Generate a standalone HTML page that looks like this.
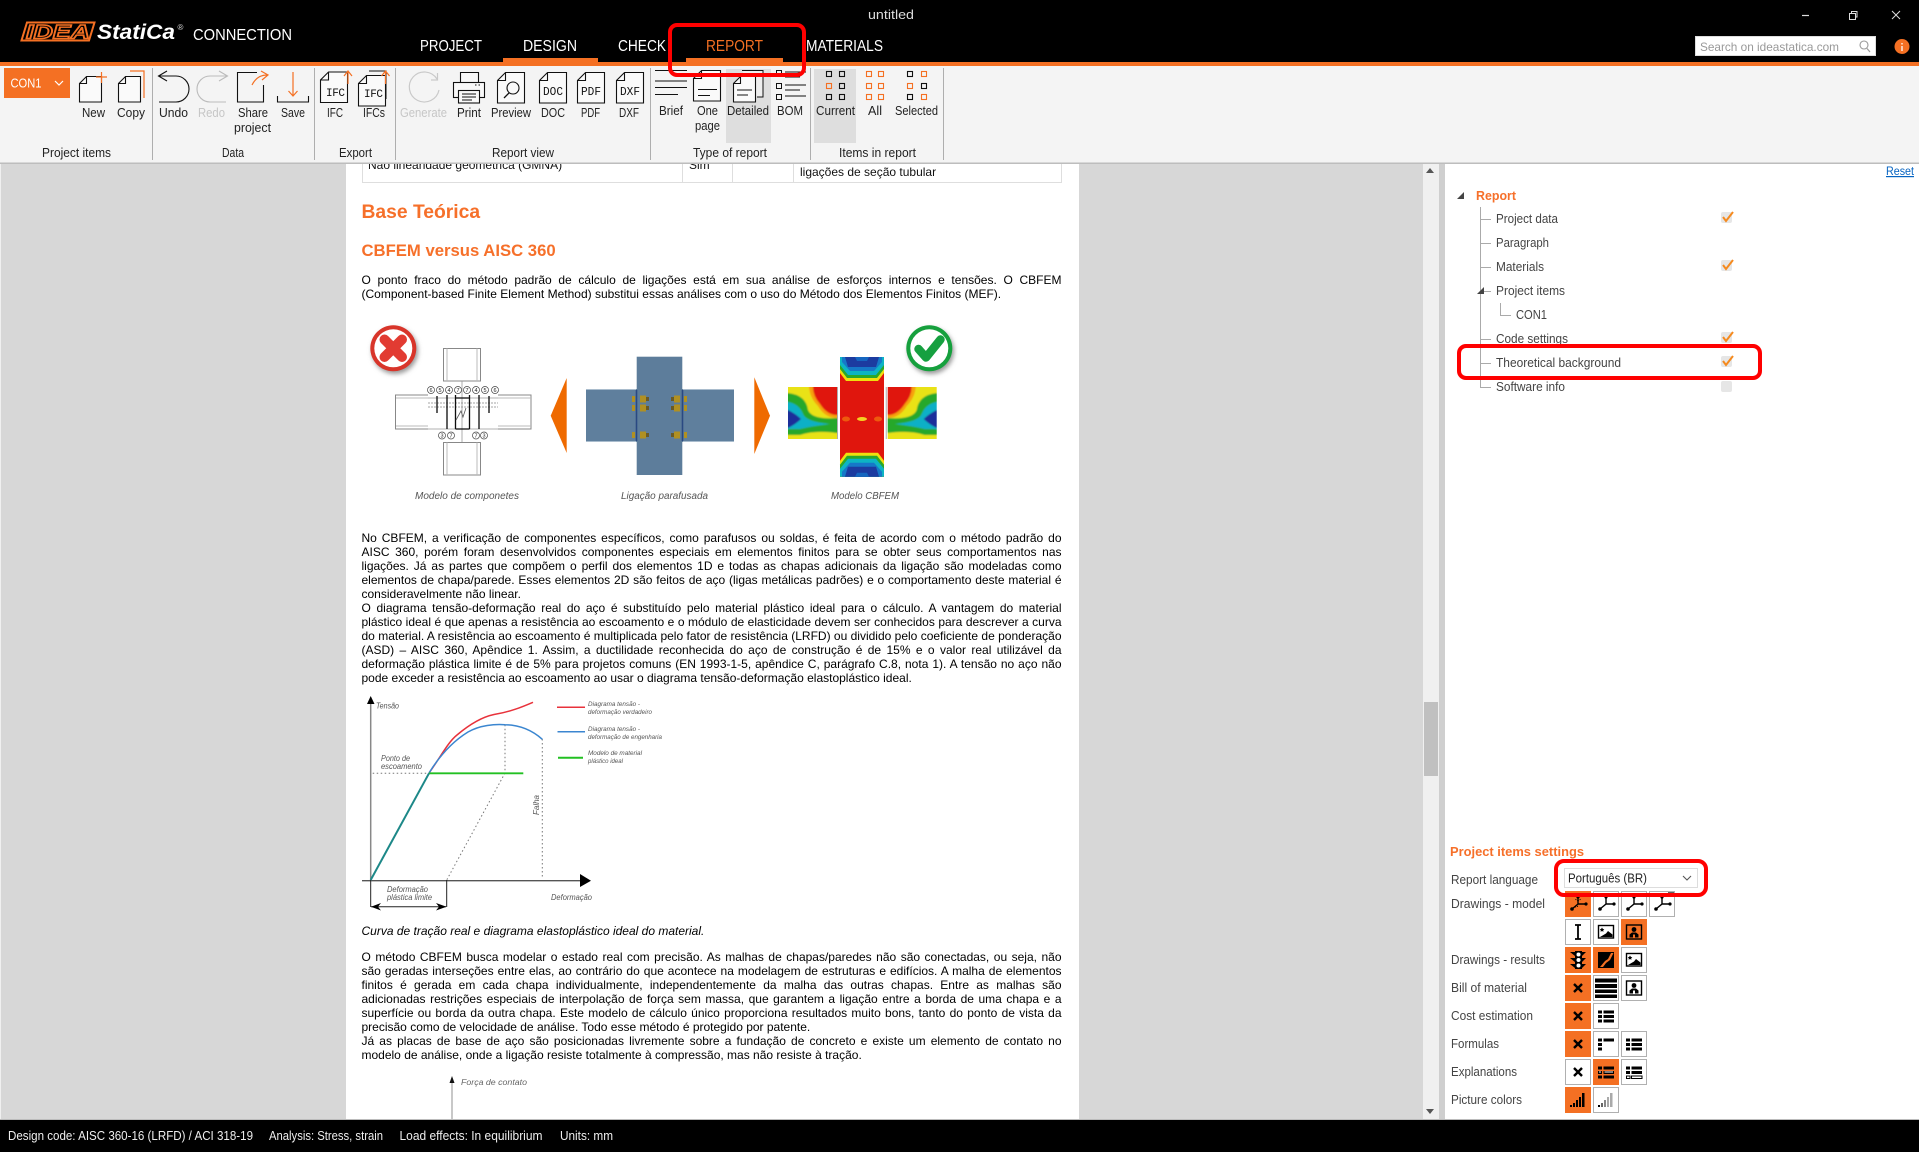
<!DOCTYPE html>
<html lang="pt"><head><meta charset="utf-8"><title>IDEA StatiCa Connection</title>
<style>
html,body{margin:0;padding:0;background:#d7d7d7;width:1919px;height:1152px;overflow:hidden}
svg{position:absolute;left:0;top:0;display:block}
svg text{font-family:"Liberation Sans",sans-serif}
.t text{font-size:12.5px;fill:#222}
.g text{font-size:12.5px;fill:#444}
.c text{font-style:italic;fill:#555}
.l{position:absolute;left:361.5px;width:700px;height:14px;font:12px/14px "Liberation Sans",sans-serif;color:#000;text-align:justify;text-align-last:justify;white-space:nowrap}
.n{text-align:left;text-align-last:left}
h1,h2{position:absolute;left:361.5px;margin:0;font-family:"Liberation Sans",sans-serif;font-weight:bold;color:#f6702a;white-space:nowrap}
h1{top:201px;font-size:19.3px;line-height:24px}
h2{top:241px;font-size:16.7px;line-height:20px}
</style></head><body>
<svg width="1919" height="1152" viewBox="0 0 1919 1152" xmlns="http://www.w3.org/2000/svg">
<defs>
<filter id="b1" x="-5%" y="-5%" width="110%" height="110%"><feGaussianBlur stdDeviation="0.35"/></filter>
<filter id="b2" x="-20%" y="-20%" width="140%" height="140%"><feGaussianBlur stdDeviation="2.5"/></filter>
<filter id="b3" x="-5%" y="-5%" width="110%" height="110%"><feGaussianBlur stdDeviation="0.8"/></filter>
<clipPath id="cp"><rect x="788" y="387" width="49" height="52"/></clipPath>
<g id="w"><rect x=".5" y=".5" width="25" height="25" fill="#fff" stroke="#b0b0b0"/></g>
<g id="o"><rect width="26" height="26" fill="#f47023"/></g>
<g id="x"><path d="M9 9L17 17M17 9L9 17" stroke="#000" stroke-width="2.4" fill="none"/></g>
<g id="ax"><path d="M13 6V13L7 18M13 13H21" stroke="#000" stroke-width="1.4" fill="none"/><circle cx="13" cy="6" r="1.6"/><circle cx="7" cy="18" r="1.8"/><circle cx="21" cy="13" r="1.6"/></g>
<g id="li"><path d="M5 7.500h4v3H5zM10.500 7.500H21v3H10.500zM5 12h4v3H5zM10.500 12H21v3H10.500zM5 16.500h4v3H5zM10.500 16.500H21v3H10.500z"/></g>
<g id="img"><rect x="5.500" y="6.500" width="15" height="12.500" fill="#fff" stroke="#000" stroke-width="1.400"/><path d="M7 18L13 14.500L15 12L19.500 15.500V18z"/><path d="M9 8.500l.8 1.400 1.500.3-1.100 1 .3 1.500-1.500-.7-1.400.7.2-1.500-1-1 1.400-.3z"/></g>
<g id="pe"><rect x="5.500" y="6" width="15" height="14" fill="none" stroke="#000" stroke-width="1.400"/><circle cx="13" cy="10.500" r="2.400"/><path d="M8.500 18.500V15.500L11 13.500H15L17.500 15.500V18.500H14V15.500H12V18.500z"/></g>
<g id="doc"><path d="M8.500.5H27.500V31H.5V8.500ZM8.500.5V8.500H.5" fill="#fafafa" stroke="#111" stroke-width="1.100"/></g>
<g id="nd"><path d="M7.500.5H22.500V26H.5V7.500ZM7.500.5V7.500H.5" fill="#fafafa" stroke="#111" stroke-width="1.100"/></g>
<g id="fe">
<polygon points="840,357 884,357 884,373 878,381 846,381 840,373" fill="#f0e010"/>
<polygon points="840,357 884,357 884,369 877,378 847,378 840,369" fill="#2aa82a"/>
<polygon points="840,357 884,357 884,365 876,375 848,375 840,365" fill="#0fb4c4"/>
<polygon points="842,357 882,357 882,362 874,371 850,371 842,362" fill="#1478c8"/>
<polygon points="845,357 879,357 876,367 848,367" fill="#1a3aa0"/>
<polygon points="855,357 869,357 867,361 857,361" fill="#1466c0"/>
</g>
<g id="pl" clip-path="url(#cp)"><g filter="url(#b3)">
<rect x="778" y="378" width="70" height="70" fill="#e9e214"/>
<path d="M778 393H788Q806 395 808 410Q812 420 837 418H848V433H837Q815 430 800 435H778Z" fill="#28a82c"/>
<path d="M778 402H788Q799 404 803 414Q806 422 830 424Q812 426 800 429H778Z" fill="#0fb0c6"/>
<path d="M778 410H788Q796 414 801 419Q796 424 788 428H778Z" fill="#1a2f9a"/>
<path d="M808 378H848V418H837Q825 418 818 406Q810 398 809 387Z" fill="#f6a010"/>
<path d="M812 378H848V415H837Q827 415 820 404Q813 396 813 387Z" fill="#e01208"/>
</g></g>
</defs>

<!-- base -->
<rect width="1919" height="1152" fill="#d7d7d7"/>
<rect x="0" y="164" width="1" height="956" fill="#f0f0f0"/>
<rect x="346" y="164" width="733" height="956" fill="#fff"/>
<rect x="1423" y="164" width="16" height="956" fill="#f0f0f0"/>
<rect x="1439" y="164" width="6" height="956" fill="#cfcfcf"/>
<rect x="1445" y="164" width="474" height="956" fill="#fff"/>
<rect x="1424" y="702" width="14" height="74" fill="#c0c0c0"/>
<path d="M1430 168l4 5h-8zM1430 1114l4-5h-8z" fill="#555"/>

<!-- table -->
<g stroke="#dedede" fill="none"><path d="M362.500 160V182.500H1061.500V160M682.500 160V182M732.500 160V182M793.500 160V182"/></g>
<text x="368" y="169" font-size="12" fill="#111">Não linearidade geométrica (GMNA)</text>
<text x="689" y="169" font-size="12" fill="#111">Sim</text>
<text x="800" y="176" font-size="12" fill="#111">ligações de seção tubular</text>

<!-- figure: connection -->
<g filter="url(#b1)">
<circle cx="395" cy="351" r="23" fill="#999" filter="url(#b2)"/>
<circle cx="393.300" cy="348.300" r="23" fill="#d8342a"/><circle cx="393.300" cy="348.300" r="19" fill="#fff"/>
<path d="M384.500 339.500L402 357M402 339.500L384.500 357" stroke="#e23a30" stroke-width="10" stroke-linecap="round"/>
<g fill="#fff" stroke="#888" stroke-width="1">
<path d="M443.500 348.500H480.500V381H443.500ZM443.500 442.500H480.500V475H443.500Z"/>
<path d="M428 395H395.500V429H428M498 395H531V429H498"/>
<path d="M447 348.500V381M477 348.500V381M447 442.500V475M477 442.500V475M396 398H428M396 426H428M498 398H531M498 426H531" stroke="#bbb"/>
</g>
<path d="M428 398H498M428 429H498M462 381V442" stroke="#999" stroke-width=".8" fill="none"/>
<path d="M428 403h70M428 407h70" stroke="#888" stroke-width=".8" stroke-dasharray="2 1" fill="none"/>
<path d="M437 396V413M447 395V429M455.500 395V429M469.500 395V429M479 395V429M489 396V413" stroke="#111" stroke-width="1.300" fill="none"/>
<path d="M455.500 398H469.500M455.500 429H469.500" stroke="#111" stroke-width="1.300"/>
<path d="M456 420L461 411L463 417L466 408" stroke="#555" stroke-width=".8" fill="none"/>
<g fill="#fff" stroke="#444" stroke-width=".7"><circle cx="431" cy="390" r="3.500"/><circle cx="440" cy="390" r="3.500"/><circle cx="449" cy="390" r="3.500"/><circle cx="458" cy="390" r="3.500"/><circle cx="467" cy="390" r="3.500"/><circle cx="476" cy="390" r="3.500"/><circle cx="485" cy="390" r="3.500"/><circle cx="495" cy="390" r="3.500"/><circle cx="442" cy="435.500" r="3.500"/><circle cx="451" cy="435.500" r="3.500"/><circle cx="476" cy="435.500" r="3.500"/><circle cx="484" cy="435.500" r="3.500"/></g>
<g font-size="5.500" fill="#222" text-anchor="middle"><text x="431" y="392">6</text><text x="440" y="392">5</text><text x="449" y="392">4</text><text x="458" y="392">7</text><text x="467" y="392">7</text><text x="476" y="392">4</text><text x="485" y="392">5</text><text x="495" y="392">6</text><text x="442" y="437.500">3</text><text x="451" y="437.500">7</text><text x="476" y="437.500">7</text><text x="484" y="437.500">3</text></g>
<polygon points="566.700,378 550.700,415.700 566.700,453" fill="#ef6a00"/>
<rect x="586" y="389" width="148" height="53" fill="#5f7f9d"/>
<rect x="636.700" y="356.700" width="45.600" height="118.300" fill="#5d7d9b"/>
<path d="M586 389.500H636M683 389.500H734M586 441.500H636M683 441.500H734" stroke="#a9bccd" stroke-width="1"/>
<path d="M636.500 390V441M682.500 390V441" stroke="#2b4a82" stroke-width="1.600"/>
<g fill="#b09024"><rect x="632" y="396" width="3" height="6"/><rect x="640" y="395.500" width="6" height="7"/><rect x="646" y="397" width="3" height="4" fill="#6a5a28"/><rect x="632" y="405" width="3" height="6"/><rect x="640" y="404.500" width="6" height="7"/><rect x="646" y="406" width="3" height="4" fill="#6a5a28"/><rect x="632" y="432" width="3" height="6"/><rect x="640" y="431.500" width="6" height="7"/><rect x="646" y="433" width="3" height="4" fill="#6a5a28"/>
<rect x="684" y="396" width="3" height="6"/><rect x="674" y="395.500" width="6" height="7"/><rect x="671" y="397" width="3" height="4" fill="#6a5a28"/><rect x="684" y="405" width="3" height="6"/><rect x="674" y="404.500" width="6" height="7"/><rect x="671" y="406" width="3" height="4" fill="#6a5a28"/><rect x="684" y="432" width="3" height="6"/><rect x="674" y="431.500" width="6" height="7"/><rect x="671" y="433" width="3" height="4" fill="#6a5a28"/></g>
<polygon points="754.300,377.300 770,415.700 754.300,454" fill="#ef6a00"/>
</g>
<!-- FEM -->
<g filter="url(#b1)">
<rect x="840" y="357" width="44" height="120" fill="#e01208"/>
<use href="#fe"/><use href="#fe" transform="translate(0,833.700) scale(1,-1)"/>
<ellipse cx="862" cy="419" rx="5" ry="2" fill="#f4d020"/><ellipse cx="846" cy="419" rx="4" ry="2.500" fill="#ee5a10"/><ellipse cx="878" cy="419" rx="4" ry="2.500" fill="#ee5a10"/>
<use href="#pl"/><use href="#pl" transform="translate(1724.700,0) scale(-1,1)"/>
<path d="M837.500 387V439M886.200 387V439" stroke="#999" stroke-width=".8"/>
<circle cx="931" cy="351" r="23" fill="#999" filter="url(#b2)"/>
<circle cx="929.300" cy="348.300" r="23" fill="#12a03c"/><circle cx="929.300" cy="348.300" r="19" fill="#fff"/>
<path d="M918.500 349L926 357.500L940.500 339.500" stroke="#14a040" stroke-width="8.500" fill="none" stroke-linecap="round" stroke-linejoin="round"/>
</g>
<g class="c" font-size="10"><text x="415" y="499" textLength="104" lengthAdjust="spacingAndGlyphs">Modelo de componetes</text><text x="621" y="499" textLength="87" lengthAdjust="spacingAndGlyphs">Ligação parafusada</text><text x="831" y="499" textLength="68" lengthAdjust="spacingAndGlyphs">Modelo CBFEM</text></g>

<!-- stress chart -->
<g filter="url(#b1)">
<path d="M370.700 880V702" stroke="#888" stroke-width="1.500"/><polygon points="370.700,696 367,704 374.500,704"/>
<path d="M362 880.700H580" stroke="#555" stroke-width="1.300"/><polygon points="580,874 591,880.700 580,887"/>
<path d="M372.700 773.300H429M505 724.700V773M505 773L446.700 880M542.300 739V878" stroke="#777" stroke-width="1" stroke-dasharray="1.500 2.500" fill="none"/>
<path d="M370.700 880V907M446.700 880V907M371 906.700H446" stroke="#222" stroke-width="1" fill="none"/>
<polygon points="371,906.700 381,903 378,906.700 381,910.500"/><polygon points="446.500,906.700 436,903 439,906.700 436,910.500"/>
<path d="M429 773C440 758 448 742 457 735C470 724 482 717 494 714.500C510 712 522 707 533 702.300" fill="none" stroke="#e8303a" stroke-width="1.500"/>
<path d="M429 773C442 752 455 740 468 732C480 725 495 724 505 724.700C520 725 532 730 542.300 739.300" fill="none" stroke="#3a86d0" stroke-width="1.500"/>
<path d="M429 773.300H523.300" stroke="#22c022" stroke-width="1.800"/>
<path d="M370.700 880L429 773.300" stroke="#1f8888" stroke-width="2"/>
<path d="M557 707.300H585" stroke="#e8303a" stroke-width="1.500"/><path d="M557.500 731.700H585" stroke="#3a86d0" stroke-width="1.500"/><path d="M558 757.700H583" stroke="#22c022" stroke-width="2"/>
<g class="c" font-size="8">
<text x="376" y="708.500" textLength="23" lengthAdjust="spacingAndGlyphs">Tensão</text>
<text x="381" y="761" textLength="29" lengthAdjust="spacingAndGlyphs">Ponto de</text>
<text x="381" y="769" textLength="41" lengthAdjust="spacingAndGlyphs">escoamento</text>
<text transform="translate(539,815) rotate(-90)" textLength="20" lengthAdjust="spacingAndGlyphs">Falha</text>
<text x="387" y="892" textLength="41" lengthAdjust="spacingAndGlyphs">Deformação</text>
<text x="387" y="900" textLength="45" lengthAdjust="spacingAndGlyphs">plástica limite</text>
<text x="551" y="900" textLength="41" lengthAdjust="spacingAndGlyphs">Deformação</text>
</g>
<g class="c" font-size="6.500">
<text x="588" y="706" textLength="52" lengthAdjust="spacingAndGlyphs">Diagrama tensão -</text>
<text x="588" y="714" textLength="64" lengthAdjust="spacingAndGlyphs">deformação verdadeiro</text>
<text x="588" y="731" textLength="52" lengthAdjust="spacingAndGlyphs">Diagrama tensão -</text>
<text x="588" y="739" textLength="74" lengthAdjust="spacingAndGlyphs">deformação de engenharia</text>
<text x="588" y="755" textLength="54" lengthAdjust="spacingAndGlyphs">Modelo de material</text>
<text x="588" y="763" textLength="35" lengthAdjust="spacingAndGlyphs">plástico ideal</text>
</g>
</g>
<text x="361.500" y="935" font-size="12" font-style="italic" fill="#000">Curva de tração real e diagrama elastoplástico ideal do material.</text>
<!-- contact force -->
<path d="M452 1083V1120" stroke="#aaa" stroke-width="1.300"/><polygon points="452,1076 449.500,1083 454.500,1083" fill="#111"/>
<text x="461" y="1085" font-size="8" font-style="italic" fill="#666" textLength="66" lengthAdjust="spacingAndGlyphs">Força de contato</text>

<!-- header -->
<rect width="1919" height="62" fill="#000"/>
<rect y="62" width="1919" height="4" fill="#f47023"/>
<rect x="503" y="58" width="95" height="4" fill="#f47023"/><rect x="686" y="58" width="97" height="4" fill="#f47023"/>
<path d="M27 22.500H94.500L89 40.500H21.500Z" fill="none" stroke="#f47023" stroke-width="2"/>
<text x="26" y="38.500" font-size="19" font-weight="bold" font-style="italic" fill="#000" stroke="#f47023" stroke-width="1.400" textLength="64" lengthAdjust="spacingAndGlyphs">IDEA</text>
<text x="97" y="39" font-size="21" font-weight="bold" font-style="italic" fill="#fff" textLength="78" lengthAdjust="spacingAndGlyphs">StatiCa</text>
<text x="177.500" y="30" font-size="8" fill="#ddd">®</text>
<text x="193" y="40" font-size="15.500" fill="#fff" textLength="99" lengthAdjust="spacingAndGlyphs">CONNECTION</text>
<g font-size="15.500" fill="#fff">
<text x="420" y="51" textLength="62" lengthAdjust="spacingAndGlyphs">PROJECT</text>
<text x="523" y="51" textLength="54" lengthAdjust="spacingAndGlyphs">DESIGN</text>
<text x="618" y="51" textLength="48" lengthAdjust="spacingAndGlyphs">CHECK</text>
<text x="706" y="51" textLength="57" lengthAdjust="spacingAndGlyphs" fill="#f47023">REPORT</text>
<text x="806" y="51" textLength="77" lengthAdjust="spacingAndGlyphs">MATERIALS</text>
</g>
<text x="868" y="19" font-size="12.500" fill="#ddd" textLength="46" lengthAdjust="spacingAndGlyphs">untitled</text>
<path d="M1802 15.500H1809" stroke="#ddd" stroke-width="1.200"/>
<path d="M1849.500 13.500H1855.500V19.500H1849.500ZM1851.500 13V11.500H1857V17H1856" fill="none" stroke="#ddd" stroke-width="1"/>
<path d="M1892 11L1900 19M1900 11L1892 19" stroke="#ddd" stroke-width="1"/>
<rect x="1695.500" y="36.500" width="180" height="19" fill="#fff" stroke="#ddd"/>
<text x="1700" y="51" font-size="12" fill="#999" textLength="139" lengthAdjust="spacingAndGlyphs">Search on ideastatica.com</text>
<circle cx="1864" cy="45" r="4" fill="none" stroke="#999" stroke-width="1.100"/><path d="M1867 48.500L1870 52" stroke="#999" stroke-width="1.200"/>
<circle cx="1902" cy="46.500" r="7.500" fill="#f47023"/><path d="M1902 43v1.500M1902 46v5" stroke="#fff" stroke-width="1.300"/>

<!-- ribbon -->
<rect y="66" width="1919" height="96.500" fill="#f4f4f4"/>
<rect y="162.500" width="1919" height="1.500" fill="#bdbdbd"/>
<g fill="#aeaeae"><rect x="152" y="68" width="1" height="92"/><rect x="314" y="68" width="1" height="92"/><rect x="395" y="68" width="1" height="92"/><rect x="650" y="68" width="1" height="92"/><rect x="810" y="68" width="1" height="92"/><rect x="943" y="68" width="1" height="92"/></g>
<rect x="726" y="69" width="45" height="74" fill="#dedede"/><rect x="814" y="69" width="42" height="74" fill="#dedede"/>
<rect x="4" y="68" width="66" height="30" fill="#f47023"/>
<text x="10.500" y="87.500" font-size="12.500" fill="#fff" textLength="31" lengthAdjust="spacingAndGlyphs">CON1</text>
<path d="M55 81L59 85L63 81" fill="none" stroke="#fff" stroke-width="1.200"/>

<use href="#nd" x="79" y="76"/><path d="M96 77H107M101.500 72V83" stroke="#f47023" stroke-width="1.200"/>
<path d="M130 71H144V98" fill="none" stroke="#f47023" stroke-width="1.200"/><use href="#nd" x="118" y="76"/>
<path d="M158.500 76H176A13 13 0 0 1 176 102H159M167 71L158.500 76L167 81" fill="none" stroke="#111" stroke-width="1.100"/>
<path d="M227.500 76H210A13 13 0 0 0 210 102H226M219 71L227.500 76L219 81" fill="none" stroke="#bbb" stroke-width="1.100"/>
<path d="M257 72.500H237.500V102H263.500V85" fill="none" stroke="#111" stroke-width="1.100"/>
<path d="M252 85Q257 75 267 75M261 71L268 75L262 80" fill="none" stroke="#f47023" stroke-width="1.200"/>
<path d="M277.500 96V102H308.500V96" fill="none" stroke="#111" stroke-width="1.100"/>
<path d="M293 72V96M288.500 91L293 96L297.500 91" fill="none" stroke="#f47023" stroke-width="1.200"/>

<use href="#doc" x="320" y="71.500"/>
<text x="326" y="96" font-size="11" fill="#111" textLength="19" lengthAdjust="spacing" style="font-family:'Liberation Mono',monospace">IFC</text>
<path d="M348 84V71M344 76L348 71L352 76" fill="none" stroke="#f47023" stroke-width="1.200"/>
<path d="M369 71H386V99" fill="none" stroke="#111" stroke-width="1"/>
<use href="#doc" x="358" y="75"/>
<text x="364" y="97" font-size="11" fill="#111" textLength="19" lengthAdjust="spacing" style="font-family:'Liberation Mono',monospace">IFC</text>
<path d="M385.500 84V71M381.500 76L385.500 71L389.500 76" fill="none" stroke="#f47023" stroke-width="1.200"/>

<path d="M437 79A15 15 0 1 0 439 90M437.500 73V80H431" fill="none" stroke="#c9c9c9" stroke-width="1.200"/>
<g fill="#f9f9f9" stroke="#111" stroke-width="1.100">
<path d="M460.500 83V72.500H478.500V83"/><rect x="453.500" y="82.500" width="31" height="15"/><rect x="458.500" y="90.500" width="21" height="12.500"/></g>
<path d="M462 94H476M462 97H476M462 100H472" stroke="#111"/><path d="M475 76h1.500M478.500 76h1.500" stroke="#111" transform="translate(0,9)"/>
<use href="#doc" x="497" y="72"/><circle cx="513" cy="88" r="6" fill="none" stroke="#111" stroke-width="1.100"/><path d="M509 93L504 98" stroke="#111" stroke-width="1.300"/>
<use href="#doc" x="539" y="72"/><text x="543" y="95" font-size="12" fill="#111" textLength="20" lengthAdjust="spacingAndGlyphs" style="font-family:'Liberation Mono',monospace">DOC</text>
<use href="#doc" x="577" y="72"/><text x="581" y="95" font-size="12" fill="#111" textLength="20" lengthAdjust="spacingAndGlyphs" style="font-family:'Liberation Mono',monospace">PDF</text>
<use href="#doc" x="616" y="72"/><text x="620" y="95" font-size="12" fill="#111" textLength="20" lengthAdjust="spacingAndGlyphs" style="font-family:'Liberation Mono',monospace">DXF</text>

<path d="M655 70.500H687M655 81H687M655 87.500H687M655 94.500H678" stroke="#111" stroke-width="1.100"/>
<use href="#doc" x="693" y="70"/><path d="M698 89.500H717M698 95.500H710" stroke="#111"/>
<path d="M742 70.500H763V97H757" fill="#eee" stroke="#111"/><use href="#nd" x="733" y="76"/><path d="M737 90H752M737 95H748" stroke="#111"/>
<g fill="none" stroke="#111"><rect x="776.500" y="70.500" width="5" height="5"/><rect x="776.500" y="83.500" width="5" height="5"/><rect x="776.500" y="94.500" width="5" height="5"/><path d="M785 72H806M785 77H800M785 85H806M785 90H800M785 96H806"/></g>
<g fill="none" stroke-width="1.100">
<g stroke="#111"><rect x="826.500" y="71.500" width="5" height="5"/><rect x="839.500" y="71.500" width="5" height="5"/><rect x="839.500" y="83.500" width="5" height="5"/><rect x="826.500" y="94.500" width="5" height="5"/><rect x="839.500" y="94.500" width="5" height="5"/></g>
<rect x="826.500" y="83.500" width="5" height="5" stroke="#f47023"/>
<g stroke="#f47023"><rect x="866.500" y="71.500" width="5" height="5"/><rect x="878.500" y="71.500" width="5" height="5"/><rect x="866.500" y="83.500" width="5" height="5"/><rect x="878.500" y="83.500" width="5" height="5"/><rect x="866.500" y="94.500" width="5" height="5"/><rect x="878.500" y="94.500" width="5" height="5"/><rect x="921.500" y="71.500" width="5" height="5"/><rect x="907.500" y="83.500" width="5" height="5"/><rect x="921.500" y="94.500" width="5" height="5"/></g>
<g stroke="#111"><rect x="907.500" y="71.500" width="5" height="5"/><rect x="921.500" y="83.500" width="5" height="5"/><rect x="907.500" y="94.500" width="5" height="5"/></g>
</g>

<g class="t">
<text x="82" y="117" textLength="23" lengthAdjust="spacingAndGlyphs">New</text>
<text x="117" y="117" textLength="28" lengthAdjust="spacingAndGlyphs">Copy</text>
<text x="159" y="117" textLength="29" lengthAdjust="spacingAndGlyphs">Undo</text>
<text x="198" y="117" textLength="27" lengthAdjust="spacingAndGlyphs" style="fill:#c6c6c6">Redo</text>
<text x="238" y="117" textLength="30" lengthAdjust="spacingAndGlyphs">Share</text>
<text x="234" y="132" textLength="37" lengthAdjust="spacingAndGlyphs">project</text>
<text x="281" y="117" textLength="24" lengthAdjust="spacingAndGlyphs">Save</text>
<text x="327" y="117" textLength="16" lengthAdjust="spacingAndGlyphs">IFC</text>
<text x="363" y="117" textLength="22" lengthAdjust="spacingAndGlyphs">IFCs</text>
<text x="400" y="117" textLength="47" lengthAdjust="spacingAndGlyphs" style="fill:#c6c6c6">Generate</text>
<text x="457" y="117" textLength="24" lengthAdjust="spacingAndGlyphs">Print</text>
<text x="491" y="117" textLength="40" lengthAdjust="spacingAndGlyphs">Preview</text>
<text x="541" y="117" textLength="24" lengthAdjust="spacingAndGlyphs">DOC</text>
<text x="581" y="117" textLength="19" lengthAdjust="spacingAndGlyphs">PDF</text>
<text x="619" y="117" textLength="20" lengthAdjust="spacingAndGlyphs">DXF</text>
<text x="659" y="115" textLength="24" lengthAdjust="spacingAndGlyphs">Brief</text>
<text x="697" y="115" textLength="21" lengthAdjust="spacingAndGlyphs">One</text>
<text x="695" y="130" textLength="25" lengthAdjust="spacingAndGlyphs">page</text>
<text x="727" y="115" textLength="42" lengthAdjust="spacingAndGlyphs">Detailed</text>
<text x="777" y="115" textLength="26" lengthAdjust="spacingAndGlyphs">BOM</text>
<text x="816" y="115" textLength="39" lengthAdjust="spacingAndGlyphs">Current</text>
<text x="868" y="115" textLength="14" lengthAdjust="spacingAndGlyphs">All</text>
<text x="895" y="115" textLength="43" lengthAdjust="spacingAndGlyphs">Selected</text>
<text x="42" y="157" textLength="69" lengthAdjust="spacingAndGlyphs">Project items</text>
<text x="222" y="157" textLength="22" lengthAdjust="spacingAndGlyphs">Data</text>
<text x="339" y="157" textLength="33" lengthAdjust="spacingAndGlyphs">Export</text>
<text x="492" y="157" textLength="62" lengthAdjust="spacingAndGlyphs">Report view</text>
<text x="693" y="157" textLength="74" lengthAdjust="spacingAndGlyphs">Type of report</text>
<text x="839" y="157" textLength="77" lengthAdjust="spacingAndGlyphs">Items in report</text>
</g>
<rect x="670" y="25" width="134" height="50" rx="7" fill="none" stroke="#f00" stroke-width="4"/>

<!-- right panel -->
<text x="1886" y="175" font-size="12" fill="#0563c1" text-decoration="underline" textLength="28" lengthAdjust="spacingAndGlyphs">Reset</text>
<polygon points="1457,199 1464,199 1464,192" fill="#444"/>
<text x="1476" y="200" font-size="12.500" font-weight="bold" fill="#f6702a" textLength="40" lengthAdjust="spacingAndGlyphs">Report</text>
<path d="M1480.500 207V387.500H1491M1481 219.500H1491M1481 243.500H1491M1481 267.500H1491M1481 291.500H1491M1481 339.500H1491M1481 363.500H1491M1500.500 303V315.500H1511" fill="none" stroke="#aaa" stroke-width="1"/>
<polygon points="1477,294 1484,294 1484,287" fill="#444"/>
<g class="g">
<text x="1496" y="223" textLength="62" lengthAdjust="spacingAndGlyphs">Project data</text>
<text x="1496" y="247" textLength="53" lengthAdjust="spacingAndGlyphs">Paragraph</text>
<text x="1496" y="271" textLength="48" lengthAdjust="spacingAndGlyphs">Materials</text>
<text x="1496" y="295" textLength="69" lengthAdjust="spacingAndGlyphs">Project items</text>
<text x="1516" y="319" textLength="31" lengthAdjust="spacingAndGlyphs">CON1</text>
<text x="1496" y="343" textLength="72" lengthAdjust="spacingAndGlyphs">Code settings</text>
<text x="1496" y="367" textLength="125" lengthAdjust="spacingAndGlyphs">Theoretical background</text>
<text x="1496" y="391" textLength="69" lengthAdjust="spacingAndGlyphs">Software info</text>
</g>
<g fill="#e6e6e6"><rect x="1721" y="212" width="11" height="11" rx="2"/><rect x="1721" y="260" width="11" height="11" rx="2"/><rect x="1721" y="332" width="11" height="11" rx="2"/><rect x="1721" y="356" width="11" height="11" rx="2"/><rect x="1721" y="381" width="11" height="11" rx="2"/></g>
<g fill="none" stroke="#f58a1f" stroke-width="2"><path d="M1723 217L1726 221L1733 212"/><path d="M1723 265L1726 269L1733 260"/><path d="M1723 337L1726 341L1733 332"/><path d="M1723 361L1726 365L1733 356"/></g>
<rect x="1459" y="346" width="301" height="32" rx="7" fill="none" stroke="#f00" stroke-width="4"/>

<text x="1450" y="856" font-size="12.500" font-weight="bold" fill="#f6702a" textLength="134" lengthAdjust="spacingAndGlyphs">Project items settings</text>
<g class="g">
<text x="1451" y="884" textLength="87" lengthAdjust="spacingAndGlyphs">Report language</text>
<text x="1451" y="908" textLength="94" lengthAdjust="spacingAndGlyphs">Drawings - model</text>
<text x="1451" y="964" textLength="94" lengthAdjust="spacingAndGlyphs">Drawings - results</text>
<text x="1451" y="992" textLength="76" lengthAdjust="spacingAndGlyphs">Bill of material</text>
<text x="1451" y="1020" textLength="82" lengthAdjust="spacingAndGlyphs">Cost estimation</text>
<text x="1451" y="1048" textLength="48" lengthAdjust="spacingAndGlyphs">Formulas</text>
<text x="1451" y="1076" textLength="66" lengthAdjust="spacingAndGlyphs">Explanations</text>
<text x="1451" y="1104" textLength="71" lengthAdjust="spacingAndGlyphs">Picture colors</text>
</g>
<!-- buttons -->
<g transform="translate(1565,891)"><use href="#o"/><use href="#ax"/><path d="M13 10l-3-2M13 10l3-2M10 16l4-1" stroke="#000" stroke-dasharray="1 1"/></g>
<g transform="translate(1593,891)"><use href="#w"/><use href="#ax"/></g>
<g transform="translate(1621,891)"><use href="#w"/><use href="#ax"/></g>
<g transform="translate(1649,891)"><use href="#w"/><use href="#ax"/><path d="M19 2H25M19 5H25" stroke="#000" stroke-width="1.300"/></g>
<g transform="translate(1565,919)"><use href="#w"/><path d="M10 6H16M13 6V20M10 20H16" stroke="#000" stroke-width="1.800" fill="none"/></g>
<g transform="translate(1593,919)"><use href="#w"/><use href="#img"/></g>
<g transform="translate(1621,919)"><use href="#o"/><use href="#pe"/></g>
<g transform="translate(1565,947)"><use href="#o"/><rect x="10" y="4" width="7" height="18"/><path d="M5 5H10V9ZM5 11H10V15ZM5 17H10V21ZM21 5H17V9ZM21 11H17V15ZM21 17H17V21Z"/><circle cx="13.500" cy="7.500" r="2" fill="#fff"/><circle cx="13.500" cy="13" r="2" fill="#fff"/><circle cx="13.500" cy="18.500" r="2" fill="#fff"/></g>
<g transform="translate(1593,947)"><use href="#o"/><rect x="5" y="5" width="16" height="16"/><path d="M7 20L12 14L15 12L18 6H20.500L17 13L13 16L10 20Z" fill="#f47023"/></g>
<g transform="translate(1621,947)"><use href="#w"/><use href="#img"/></g>
<g transform="translate(1565,975)"><use href="#o"/><use href="#x"/></g>
<g transform="translate(1593,975)"><use href="#w"/><path d="M2 3.500H24V7.500H2ZM2 9H24V13H2ZM2 14.500H24V18H2ZM2 19.500H24V23H2Z"/></g>
<g transform="translate(1621,975)"><use href="#w"/><use href="#pe"/></g>
<g transform="translate(1565,1003)"><use href="#o"/><use href="#x"/></g>
<g transform="translate(1593,1003)"><use href="#w"/><use href="#li"/></g>
<g transform="translate(1565,1031)"><use href="#o"/><use href="#x"/></g>
<g transform="translate(1593,1031)"><use href="#w"/><path d="M5 7.500h4v3H5zM10.500 7.500H21v3H10.500zM5 12h4v3H5zM5 16.500h4v3H5z"/></g>
<g transform="translate(1621,1031)"><use href="#w"/><use href="#li"/></g>
<g transform="translate(1565,1059)"><use href="#w"/><use href="#x"/></g>
<g transform="translate(1593,1059)"><use href="#o"/><use href="#li"/><path d="M6 13h2M11.500 13H20" stroke="#fff" stroke-width="1"/></g>
<g transform="translate(1621,1059)"><use href="#w"/><path d="M5 7.500h4v3H5zM10.500 7.500H21v3H10.500zM5 12h4v3H5zM10.500 12H21v3H10.500z"/><rect x="5.500" y="17" width="3.500" height="2.500" fill="none" stroke="#000"/><rect x="10.500" y="17" width="10.500" height="2.500" fill="none" stroke="#000"/></g>
<g transform="translate(1565,1087)"><use href="#o"/><path d="M5 18h2v2H5zM8 16h2v4H8zM11 13h2v7h-2zM14 10h2v10h-2zM17 6h2.500v14H17z"/></g>
<g transform="translate(1593,1087)"><use href="#w"/><path d="M5 18h2v2H5z"/><path d="M8 16h2v4H8z" fill="#666"/><path d="M11 13h2v7h-2z" fill="#888"/><path d="M14 10h2v10h-2zM17 6h2.500v14H17z" fill="#aaa"/></g>
<rect x="1564.500" y="868.500" width="133" height="19" fill="#fff" stroke="#ddd"/>
<text x="1568" y="882.500" font-size="12.500" fill="#222" textLength="79" lengthAdjust="spacingAndGlyphs">Português (BR)</text>
<path d="M1683 876L1687 880L1691 876" fill="none" stroke="#555" stroke-width="1.100"/>
<rect x="1556" y="861" width="150" height="34" rx="8" fill="none" stroke="#f00" stroke-width="4"/>

<!-- status -->
<rect y="1119" width="1919" height="1" fill="#bbb"/>
<rect y="1120" width="1919" height="32" fill="#000"/>
<g font-size="12.500" fill="#eee">
<text x="8" y="1140" textLength="245" lengthAdjust="spacingAndGlyphs">Design code: AISC 360-16 (LRFD) / ACI 318-19</text>
<text x="269" y="1140" textLength="114" lengthAdjust="spacingAndGlyphs">Analysis: Stress, strain</text>
<text x="399.500" y="1140" textLength="143" lengthAdjust="spacingAndGlyphs">Load effects: In equilibrium</text>
<text x="560" y="1140" textLength="53" lengthAdjust="spacingAndGlyphs">Units: mm</text>
</g>
</svg>

<h1>Base Teórica</h1>
<h2>CBFEM versus AISC 360</h2>
<div class="l" style="top:273px">O ponto fraco do método padrão de cálculo de ligações está em sua análise de esforços internos e tensões. O CBFEM</div>
<div class="l n" style="top:287px">(Component-based Finite Element Method) substitui essas análises com o uso do Método dos Elementos Finitos (MEF).</div>

<div class="l" style="top:531px">No CBFEM, a verificação de componentes específicos, como parafusos ou soldas, é feita de acordo com o método padrão do</div>
<div class="l" style="top:545px">AISC 360, porém foram desenvolvidos componentes especiais em elementos finitos para se obter seus comportamentos nas</div>
<div class="l" style="top:559px">ligações. Já as partes que compõem o perfil dos elementos 1D e todas as chapas adicionais da ligação são modeladas como</div>
<div class="l" style="top:573px">elementos de chapa/parede. Esses elementos 2D são feitos de aço (ligas metálicas padrões) e o comportamento deste material é</div>
<div class="l n" style="top:587px">consideravelmente não linear.</div>
<div class="l" style="top:601px">O diagrama tensão-deformação real do aço é substituído pelo material plástico ideal para o cálculo. A vantagem do material</div>
<div class="l" style="top:615px">plástico ideal é que apenas a resistência ao escoamento e o módulo de elasticidade devem ser conhecidos para descrever a curva</div>
<div class="l" style="top:629px">do material. A resistência ao escoamento é multiplicada pelo fator de resistência (LRFD) ou dividido pelo coeficiente de ponderação</div>
<div class="l" style="top:643px">(ASD) – AISC 360, Apêndice 1. Assim, a ductilidade reconhecida do aço de construção é de 15% e o valor real utilizável da</div>
<div class="l" style="top:657px">deformação plástica limite é de 5% para projetos comuns (EN 1993-1-5, apêndice C, parágrafo C.8, nota 1). A tensão no aço não</div>
<div class="l n" style="top:671px">pode exceder a resistência ao escoamento ao usar o diagrama tensão-deformação elastoplástico ideal.</div>

<div class="l" style="top:950px">O método CBFEM busca modelar o estado real com precisão. As malhas de chapas/paredes não são conectadas, ou seja, não</div>
<div class="l" style="top:964px">são geradas interseções entre elas, ao contrário do que acontece na modelagem de estruturas e edifícios. A malha de elementos</div>
<div class="l" style="top:978px">finitos é gerada em cada chapa individualmente, independentemente da malha das outras chapas. Entre as malhas são</div>
<div class="l" style="top:992px">adicionadas restrições especiais de interpolação de força sem massa, que garantem a ligação entre a borda de uma chapa e a</div>
<div class="l" style="top:1006px">superfície ou borda da outra chapa. Este modelo de cálculo único proporciona resultados muito bons, tanto do ponto de vista da</div>
<div class="l n" style="top:1020px">precisão como de velocidade de análise. Todo esse método é protegido por patente.</div>
<div class="l" style="top:1034px">Já as placas de base de aço são posicionadas livremente sobre a fundação de concreto e existe um elemento de contato no</div>
<div class="l n" style="top:1048px">modelo de análise, onde a ligação resiste totalmente à compressão, mas não resiste à tração.</div>
</body></html>
